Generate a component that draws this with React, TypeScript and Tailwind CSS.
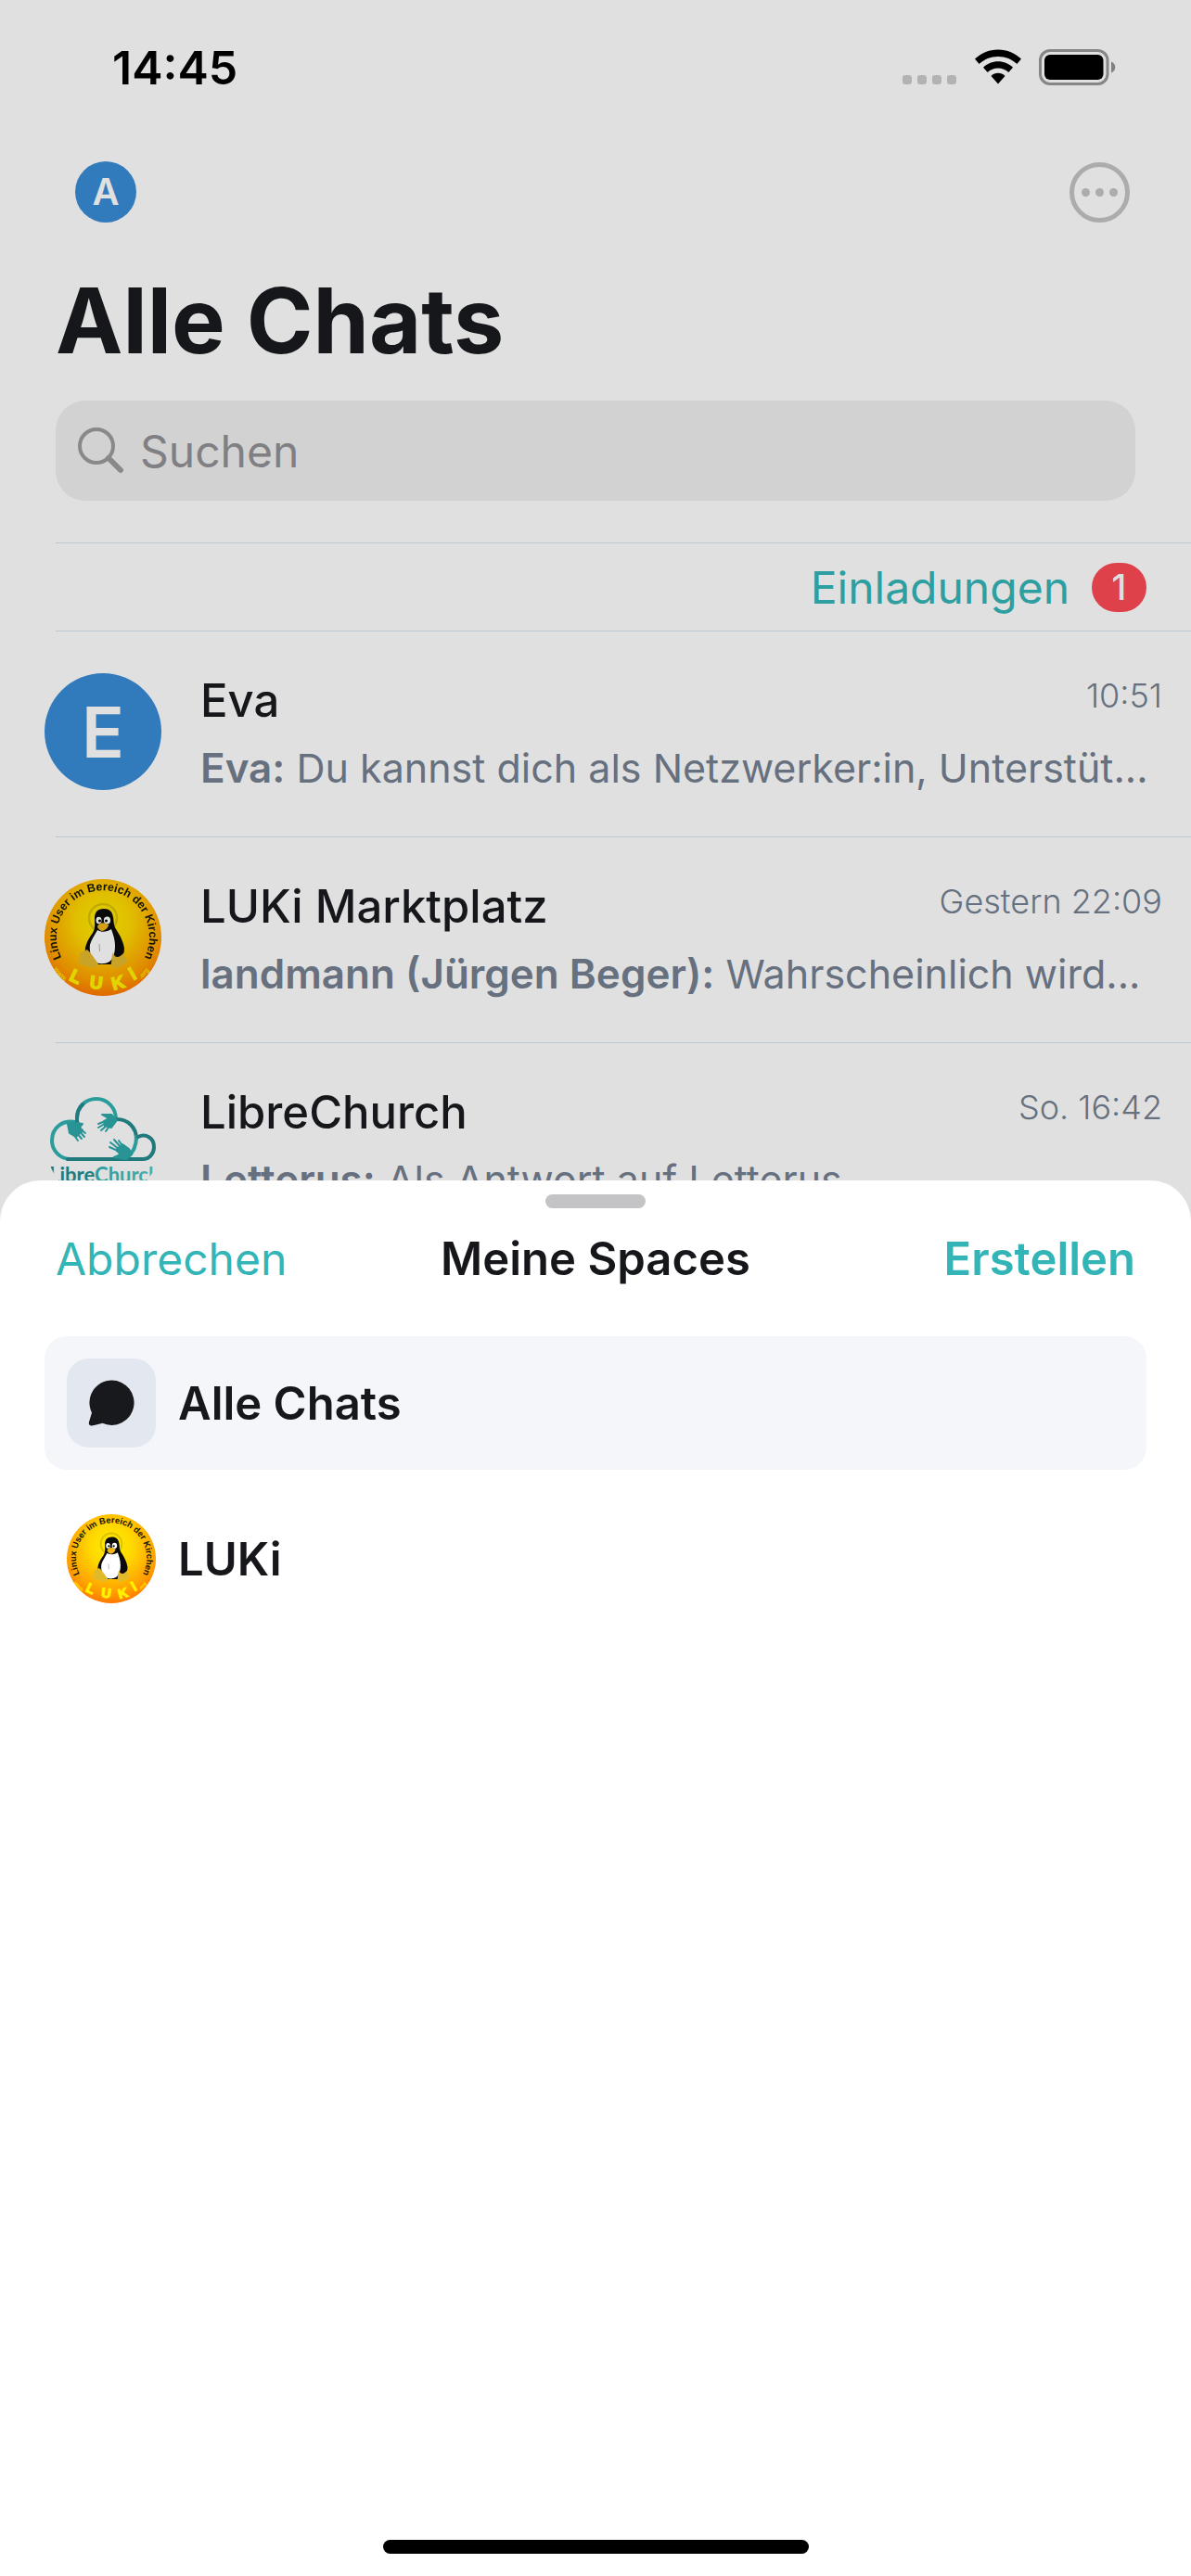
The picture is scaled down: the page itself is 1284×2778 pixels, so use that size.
import React, { useId } from "react";

type Chat = {
  name: string;
  time: string;
  sender: string;
  text: string;
  avatar: React.ReactNode;
};

function WifiIcon() {
  return (
    <svg viewBox="0 0 52 38" className="h-[38px] w-[52px]" aria-hidden="true">
      <path d="M26 0.5C36 0.5 44.6 4.4 51 10.6L46.4 16C41 10.8 34 7.9 26 7.9S11 10.8 5.6 16L1 10.6C7.4 4.4 16 0.5 26 0.5Z" />
      <path d="M26 13.2C32.3 13.2 37.9 15.6 42 19.7L37.3 25C34.2 22 30.4 20.4 26 20.4S17.8 22 14.7 25L10 19.7C14.1 15.6 19.7 13.2 26 13.2Z" />
      <path d="M26 25.7C28.9 25.7 31.5 26.9 33.5 28.9L26 37.5L18.5 28.9C20.5 26.9 23.1 25.7 26 25.7Z" />
    </svg>
  );
}

function BatteryIcon() {
  return (
    <svg viewBox="0 0 83 40" className="h-10 w-[83px]" aria-hidden="true">
      <rect x="1.5" y="1.5" width="72.5" height="36" rx="10.5" fill="none" stroke="#868686" strokeWidth="3" />
      <rect x="6" y="6" width="63.5" height="27" rx="6" />
      <path d="M78 13.5C80.5 14.5 82.3 16.7 82.3 19.5S80.5 24.5 78 25.5Z" fill="#808080" />
    </svg>
  );
}

function StatusBar() {
  return (
    <div className="flex h-[144px] items-start justify-between pt-[43px] pr-[81px] pl-[121px]">
      <span className="text-[50px] leading-[60px] font-semibold text-black">14:45</span>
      <div className="flex items-start pt-2.5">
        <div className="flex gap-1.5 pt-7 pr-[19px]">
          <span className="size-2.5 rounded-[3px] bg-[#b3b3b3]" />
          <span className="size-2.5 rounded-[3px] bg-[#b3b3b3]" />
          <span className="size-2.5 rounded-[3px] bg-[#b3b3b3]" />
          <span className="size-2.5 rounded-[3px] bg-[#b3b3b3]" />
        </div>
        <WifiIcon />
        <div className="pl-[18px]">
          <BatteryIcon />
        </div>
      </div>
    </div>
  );
}

function LetterAvatar({ letter }: { letter: string }) {
  return (
    <div className="flex size-[126px] shrink-0 items-center justify-center rounded-full bg-[#317abc] text-[76px] leading-none font-semibold text-[#e0e0e0]">
      {letter}
    </div>
  );
}

/* Round club badge: a penguin in a halo with lettering running round the rim. */
function LukiLogo({ dimmed = false }: { dimmed?: boolean }) {
  const id = useId();
  const size = dimmed ? "size-[126px] brightness-[0.88]" : "size-24";
  return (
    <svg viewBox="0 0 126 126" className={`${size} shrink-0`} role="img" aria-label="LUKi">
      <defs>
        <radialGradient id={`${id}bg`} cx="0.5" cy="0.36" r="0.68">
          <stop offset="0" stopColor="#ffee00" />
          <stop offset="0.35" stopColor="#ffd800" />
          <stop offset="0.75" stopColor="#ffa000" />
          <stop offset="1" stopColor="#ff6c00" />
        </radialGradient>
        <path id={`${id}top`} d="M28 98A50 50 0 1 1 98 98" />
        <path id={`${id}www`} d="M10 97A61 61 0 0 0 40 120" />
        <path id={`${id}org`} d="M91 117A61 61 0 0 0 116 93" />
      </defs>
      <circle cx="63" cy="63" r="63" fill={`url(#${id}bg)`} />
      <g fontFamily="Liberation Sans, Arial, sans-serif" fontWeight="700">
        <text fontSize="12.4" fill="#151500">
          <textPath href={`#${id}top`} startOffset="50%" textAnchor="middle">
            Linux User im Bereich der Kirchen
          </textPath>
        </text>
        <text fontSize="7" fill="#ffe500">
          <textPath href={`#${id}www`}>www.</textPath>
        </text>
        <text fontSize="7" fill="#ffe500">
          <textPath href={`#${id}org`} startOffset="16">.org</textPath>
        </text>
      </g>
      <g fontFamily="Liberation Sans, Arial, sans-serif" fontWeight="700" fontSize="19" fill="#fff200" stroke="#fff200" strokeWidth="1.5" textAnchor="middle">
        <text transform="translate(31 111) rotate(25)">L</text>
        <text transform="translate(55 118) rotate(7)">U</text>
        <text transform="translate(81 118) rotate(-15)">K</text>
        <text transform="translate(98 108) rotate(-30)">i</text>
      </g>
      <circle cx="63" cy="42" r="15" fill="none" stroke="#cdb400" strokeWidth="2.5" opacity="0.7" />
      <path d="M64 32C57 32 54 36 54 42C54 49 55 53 52 58C47 65 43 72 44 79C45 85 50 91 58 92H73C80 91 86 84 86 75C85 67 81 60 77 54C74 49 75 46 74 41C73 35 70 32 64 32Z" fill="#0b0b0b" />
      <path d="M57 55C62 58 67 57 72 54C74 60 76 65 76 72C76 80 74 86 70 89C65 92 58 92 55 89C50 85 48 79 49 71C50 66 54 61 57 55Z" fill="#fff" />
      <ellipse cx="58.5" cy="44.5" rx="3" ry="3.8" fill="#fff" />
      <ellipse cx="67.5" cy="44.5" rx="3.6" ry="4" fill="#fff" />
      <circle cx="59.5" cy="45" r="1.5" />
      <circle cx="66.5" cy="45" r="1.5" />
      <path d="M57 51C59 47 64 46 69 49.5C69 52 65 56 62 56C60 56 57 53 57 51Z" fill="#efb61a" />
      <path d="M59 70L59.5 78" stroke="#999" strokeWidth="0.8" />
      <path d="M45 76C49 77 55 88 58 91C57 96 51 97 47 94C44 93 39 93 37 91C36 88 39 85 38 80C40 77 44 79 45 76Z" fill="#e3b92c" />
      <path d="M74 79C75 85 80 86 85 80C86 83 88 87 90 88C88 92 82 93 78 96C74 96 71 94 72 90C73 86 72 82 74 79Z" fill="#e3b92c" />
    </svg>
  );
}

/* Teal cloud outline held by three hands, with its name written underneath. */
function LibreChurchLogo() {
  const id = useId();
  return (
    <svg viewBox="0 0 126 126" className="size-[126px] shrink-0" role="img" aria-label="LibreChurch">
      <defs>
        <linearGradient id={`${id}text`} x1="0" x2="1">
          <stop offset="0" stopColor="#1f7878" />
          <stop offset="0.41" stopColor="#1f7f7f" />
          <stop offset="0.42" stopColor="#2a9c9c" />
          <stop offset="1" stopColor="#49b0ae" />
        </linearGradient>
        <clipPath id={`${id}clip`}>
          <circle cx="63" cy="63" r="62" />
        </clipPath>
      </defs>
      <g fill="none" strokeWidth="4" strokeLinecap="round">
        <path d="M36 41C20 36 8 46 8 60C8 71 17 80 28 80" stroke="#2a9c9c" />
        <path d="M35 40V36C35 24 44 15 56 15C68 15 77 25 77 37" stroke="#2a9c9c" />
        <path d="M35 40V36C35 30 37 25 41 21" stroke="#207a7b" />
        <path d="M78 37C90 37 99 46 99 58" stroke="#207a7b" />
        <path d="M99 56C99 66 96 73 89 78" stroke="#2a9c9c" />
        <path d="M25 80H106C113 80 118 74 118 67C118 57 109 52 101 56" stroke="#207a7b" />
      </g>
      <g fill="#289495" stroke="#289495" strokeWidth="2" strokeLinecap="round" strokeLinejoin="round">
        <path d="M25 42L33 41L41 42L38 46L41 49L34 56L27 52Z" />
        <path d="M31 53L36 60M34 51L40 58M37 49L43 56M39 48L44 52" fill="none" />
        <path d="M62 32L72 32L78 38L72 46L65 44L64 39L69 36Z" />
        <path d="M68 38L58 42M68 40L58 46M69 42L61 49M71 43L66 50" fill="none" />
        <path d="M75 78L82 75L77 70L84 64L91 69L94 75L88 80Z" />
        <path d="M79 71L70 67M80 69L71 62M82 67L75 59M85 67L80 60" fill="none" />
      </g>
      <text x="5" y="105" clipPath={`url(#${id}clip)`} fontFamily="Lato, sans-serif" fontWeight="700" fontSize="22" fill={`url(#${id}text)`}>
        LibreChurch
      </text>
    </svg>
  );
}

const chats: Chat[] = [
  {
    name: "Eva",
    time: "10:51",
    sender: "Eva:",
    text: "Du kannst dich als Netzwerker:in, Unterstüt...",
    avatar: <LetterAvatar letter="E" />,
  },
  {
    name: "LUKi Marktplatz",
    time: "Gestern 22:09",
    sender: "landmann (Jürgen Beger):",
    text: "Wahrscheinlich wird...",
    avatar: <LukiLogo dimmed />,
  },
  {
    name: "LibreChurch",
    time: "So. 16:42",
    sender: "Letterus:",
    text: "Als Antwort auf Letterus",
    avatar: <LibreChurchLogo />,
  },
];

function ChatRow({ chat }: { chat: Chat }) {
  return (
    <li className="flex h-[222px] pt-[45px] pl-12">
      {chat.avatar}
      <div className="ml-[42px] min-w-0 flex-1">
        <div className="flex items-start justify-between pr-[31px]">
          <span className="text-[49px] leading-[60px] font-medium text-[#15171b]">{chat.name}</span>
          <time className="text-[36px] leading-[48px] font-light text-[#66707f]">{chat.time}</time>
        </div>
        <p className="mt-3 truncate pr-6 text-[43px] leading-[60px] text-[#66707f]">
          <span className="text-[44px] font-semibold">{chat.sender}</span> {chat.text}
        </p>
      </div>
    </li>
  );
}

function ChatsScreen() {
  return (
    <main>
      <StatusBar />
      <div className="flex items-center justify-between pt-[30px] pr-[66px] pl-[81px]">
        <button aria-label="Profil" className="flex size-[66px] items-center justify-center rounded-full bg-[#317abc] text-[40px] leading-none font-semibold text-[#e0e0e0]">
          A
        </button>
        <button aria-label="Mehr" className="flex size-[65px] items-center justify-center gap-1.5 rounded-full border-[5px] border-[#acacac]">
          <span className="size-[9px] rounded-full bg-[#acacac]" />
          <span className="size-[9px] rounded-full bg-[#acacac]" />
          <span className="size-[9px] rounded-full bg-[#acacac]" />
        </button>
      </div>
      <h1 className="mt-[46px] pl-[60px] text-[97px] leading-[120px] font-bold text-[#15171b]">Alle Chats</h1>
      <label className="mx-[60px] mt-[26px] flex h-[108px] items-center gap-[17px] rounded-[32px] bg-[#d2d2d2] pl-6">
        <svg viewBox="0 0 50 50" className="size-[50px] shrink-0" fill="none" stroke="#88898a" aria-hidden="true">
          <circle cx="20" cy="20" r="18" strokeWidth="4" />
          <path d="M33 33L46 46" strokeWidth="6" strokeLinecap="round" />
        </svg>
        <input type="search" aria-label="Suchen" placeholder="Suchen" className="min-w-0 flex-1 bg-transparent pt-0.5 text-[48px] leading-[60px] outline-none placeholder:text-[#808084]" />
      </label>
      <div className="mt-[45px] ml-[60px] flex h-24 items-center justify-end gap-6 border-y border-[#bec6d0] pr-12">
        <a href="#einladungen" className="pt-0.5 text-[48px] leading-[60px] text-[#2d9fa0]">Einladungen</a>
        <span className="flex h-[53px] w-[59px] items-center justify-center rounded-full bg-[#df414b] text-[38px] leading-none font-medium text-[#e0e0e0]">1</span>
      </div>
      <ul>
        {chats.map((chat, index) => (
          <React.Fragment key={chat.name}>
            {index > 0 && <li aria-hidden="true" className="-mt-px ml-[60px] h-px bg-[#bec6d0]" />}
            <ChatRow chat={chat} />
          </React.Fragment>
        ))}
      </ul>
    </main>
  );
}

function SpacesSheet() {
  return (
    <section aria-label="Meine Spaces" className="absolute inset-x-0 top-[1273px] bottom-0 flex flex-col rounded-t-[44px] bg-white pt-[15px]">
      <div className="h-[15px] w-[108px] self-center rounded-full bg-[#c4c4c6]" />
      <header className="mt-[25px] grid grid-cols-3 items-center px-[60px] text-[49px] leading-[60px]">
        <button className="justify-self-start text-[48px] text-[#33b4b6]">Abbrechen</button>
        <h2 className="justify-self-center font-semibold whitespace-nowrap text-[#15171b]">Meine Spaces</h2>
        <button className="justify-self-end font-semibold text-[#33b4b6]">Erstellen</button>
      </header>
      <nav className="mt-[53px] flex flex-col gap-6 px-12">
        <button className="flex h-36 items-center gap-6 rounded-3xl bg-[#f4f6fa] px-6 text-[49px] leading-[60px] font-semibold text-[#15171b]">
          <span className="flex size-24 items-center justify-center rounded-3xl bg-[#e2e7f0]">
            <svg viewBox="0 0 50 50" className="size-[50px]" fill="#17191c" aria-hidden="true">
              <path d="M25.5 0.5A24.2 24.2 0 1 1 15.5 46.8C12 47.5 7 49.2 4 49.5C1.5 49.7 0.3 48 1 45.5L4 35.5A24.2 24.2 0 0 1 25.5 0.5Z" />
            </svg>
          </span>
          <span className="pt-0.5">Alle Chats</span>
        </button>
        <button className="flex h-36 items-center gap-6 rounded-3xl px-6 text-[49px] leading-[60px] font-semibold text-[#15171b]">
          <LukiLogo />
          <span className="pt-0.5">LUKi</span>
        </button>
      </nav>
      <div className="mt-auto mb-6 h-[15px] w-[459px] self-center rounded-full bg-black" />
    </section>
  );
}

export default function App() {
  return (
    <div className="relative h-screen overflow-hidden bg-[#e0e0e0] font-['Inter',sans-serif]">
      <ChatsScreen />
      <SpacesSheet />
    </div>
  );
}
